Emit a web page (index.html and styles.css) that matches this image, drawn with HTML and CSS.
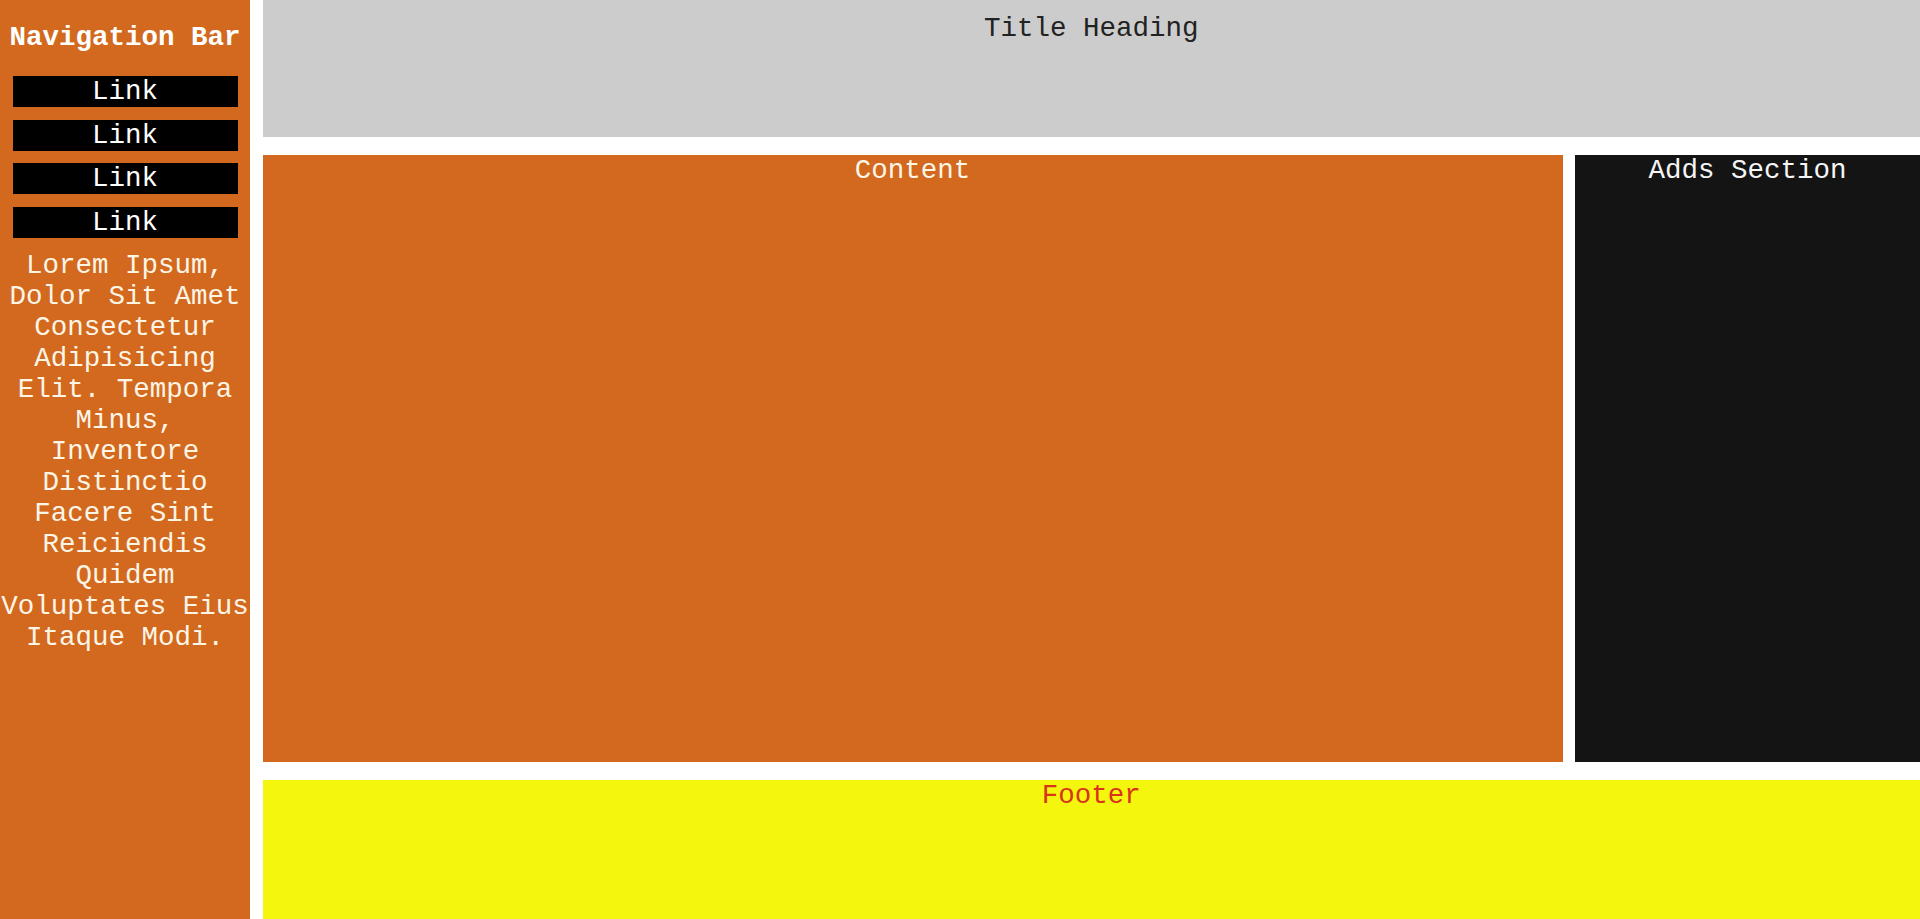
FILE: index.html
```html
<!DOCTYPE html>
<html lang="en">
<head>
<meta charset="utf-8">
<title>Layout</title>
<link rel="stylesheet" href="styles.css">
</head>
<body>
<div class="page">
  <nav class="sidebar">
    <h3 class="nav-title">Navigation Bar</h3>
    <a class="nav-link" href="#">Link</a>
    <a class="nav-link" href="#">Link</a>
    <a class="nav-link" href="#">Link</a>
    <a class="nav-link" href="#">Link</a>
    <p class="nav-text">Lorem Ipsum, Dolor Sit Amet Consectetur Adipisicing Elit. Tempora Minus, Inventore Distinctio Facere Sint Reiciendis Quidem Voluptates Eius Itaque Modi.</p>
  </nav>
  <header class="header"><div class="title">Title Heading</div></header>
  <main class="content">Content</main>
  <aside class="ads">Adds Section</aside>
  <footer class="footer">Footer</footer>
</div>
</body>
</html>
```
FILE: styles.css
```css
html, body {
  margin: 0;
  padding: 0;
  background: #ffffff;
}
body {
  font-family: "Courier New", "Nimbus Mono PS", "Nimbus Mono L", "FreeMono", "Courier", "Liberation Mono", monospace;
  font-size: 27.5px;
}
.page {
  display: grid;
  grid-template-columns: 250px 1fr 345px;
  grid-template-rows: 137px 607.5px 1fr;
  column-gap: 12.5px;
  row-gap: 17.5px;
  height: 100vh;
}
.sidebar {
  grid-column: 1;
  grid-row: 1 / 4;
  background: #d2691e;
  color: #fdf5e6;
  text-align: center;
  display: flow-root;
}
.nav-title {
  font-size: 27.5px;
  font-weight: bold;
  margin: 22px 0 23px;
  color: #ffffff;
}
.nav-link {
  display: block;
  background: #000000;
  color: #ffffff;
  text-decoration: none;
  margin: 12.5px;
}
.nav-link:first-of-type {
  margin-top: 0;
}
.nav-text {
  margin: 12.5px 0;
}
.header {
  grid-column: 2 / 4;
  grid-row: 1;
  background: #cccccc;
  color: #222222;
  text-align: center;
  padding-top: 12.5px;
}
.content {
  grid-column: 2;
  grid-row: 2;
  background: #d2691e;
  color: #fdf5e6;
  text-align: center;
}
.ads {
  grid-column: 3;
  grid-row: 2;
  background: #141414;
  color: #f5f5f5;
  text-align: center;
}
.footer {
  grid-column: 2 / 4;
  grid-row: 3;
  background: #f4f70d;
  color: #d9341a;
  text-align: center;
}
```
